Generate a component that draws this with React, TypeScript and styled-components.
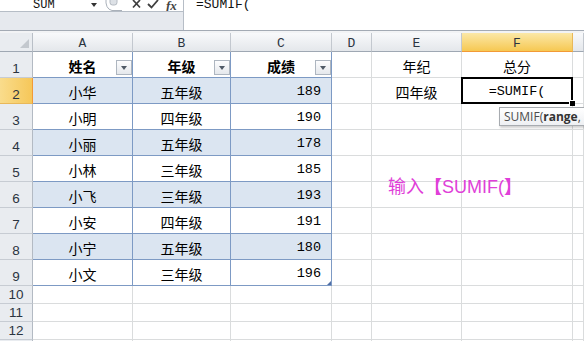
import React from "react";
import styled, { createGlobalStyle } from "styled-components";

const Global = createGlobalStyle`
  html, body { margin: 0; padding: 0; background: #fff; overflow: hidden; }
  body { width: 584px; height: 341px; font-family: "Liberation Sans", "Noto Sans CJK SC", sans-serif; }
`;

const Screen = styled.div`
  position: relative;
  width: 584px;
  height: 341px;
  overflow: hidden;
  background: #fff;
  display: flex;
  flex-direction: column;
`;

const FormulaBar = styled.div`
  display: flex;
  height: 30px;
  flex-shrink: 0;
  border-bottom: 1px solid #a3aab4;
`;

const LeftPane = styled.div`
  width: 183px;
  display: flex;
  flex-direction: column;
  background: #e6e9ee;
  border-right: 1px solid #b6bdc6;
`;

const NameRow = styled.div`
  height: 11px;
  background: #fff;
  border-bottom: 1px solid #b6bdc6;
  display: flex;
  align-items: flex-start;
  overflow: hidden;
`;

const NameBox = styled.div`
  width: 104px;
  display: flex;
  align-items: flex-start;
  justify-content: space-between;
  padding: 0 7px 0 33px;
  margin-top: -1px;
  box-sizing: border-box;
  font: 12px/12px "Liberation Mono", monospace;
  color: #111;
`;

const DropArrow = styled.span`
  width: 0;
  height: 0;
  border-left: 3px solid transparent;
  border-right: 3px solid transparent;
  border-top: 4px solid #333;
  margin-top: 4px;
`;

const Buttons = styled.div`
  display: flex;
  align-items: flex-start;
  gap: 6px;
  flex: 1;
`;

const Fx = styled.span`
  font: italic 700 13px/11px "Liberation Serif", serif;
  color: #444;
  margin-left: 1px;
`;

const FormulaText = styled.div`
  flex: 1;
  background: #fff;
  padding-left: 12px;
  margin-top: -1px;
  font: 13px/12px "Liberation Mono", monospace;
  color: #111;
  overflow: hidden;
`;

const Spacer = styled.div`
  height: 2px;
  flex-shrink: 0;
  background: #f2f3f5;
`;

const Sheet = styled.div`
  display: grid;
  grid-template-columns: 33px 100px 98px 101px 40px 90px 111px 1fr;
  grid-template-rows: 19px repeat(9, 26px) repeat(4, 18px);
`;

const Corner = styled.div`
  position: relative;
  box-sizing: border-box;
  background: #e9ecf0;
  border-right: 1px solid #b9bfc7;
  border-bottom: 1px solid #9fa8b3;
  &::after {
    content: "";
    position: absolute;
    right: 3px;
    bottom: 3px;
    width: 0;
    height: 0;
    border-left: 9px solid transparent;
    border-bottom: 9px solid #c3c8ce;
  }
`;

const ColHead = styled.div<{ $sel?: boolean }>`
  box-sizing: border-box;
  display: flex;
  align-items: center;
  justify-content: center;
  padding-top: 2px;
  background: ${(p) => (p.$sel ? "linear-gradient(#fbe8a8, #f6c852)" : "linear-gradient(#f8f9fb, #e4e7eb)")};
  border-right: 1px solid ${(p) => (p.$sel ? "#e9b859" : "#c3c8cf")};
  border-bottom: 1px solid ${(p) => (p.$sel ? "#f29a36" : "#9fa8b3")};
  font: 13px "Liberation Mono", monospace;
  color: #2b3440;
`;

const RowHead = styled.div<{ $sel?: boolean; $small?: boolean }>`
  box-sizing: border-box;
  display: flex;
  align-items: ${(p) => (p.$small ? "center" : "flex-end")};
  justify-content: center;
  padding-bottom: ${(p) => (p.$small ? "0" : "1px")};
  background: ${(p) => (p.$sel ? "linear-gradient(90deg, #f9dc8c, #f6c759)" : "#e9ecf0")};
  border-right: 1px solid ${(p) => (p.$sel ? "#f29a36" : "#b3bac3")};
  border-bottom: 1px solid ${(p) => (p.$sel ? "#e9b859" : "#c7ccd3")};
  font: 13.5px "Liberation Sans", sans-serif;
  color: #2b3440;
`;

type Align = "left" | "center" | "right";

const Cell = styled.div<{
  $tbl?: boolean;
  $band?: boolean;
  $align?: Align;
  $bold?: boolean;
  $num?: boolean;
  $active?: boolean;
  $handle?: boolean;
}>`
  position: relative;
  box-sizing: border-box;
  min-width: 0;
  display: flex;
  align-items: center;
  justify-content: ${(p) => (p.$align === "right" ? "flex-end" : p.$align === "left" ? "flex-start" : "center")};
  padding: 2px ${(p) => (p.$align === "right" ? "10px" : "2px")} 0 2px;
  background: ${(p) => (p.$band ? "#dbe5f1" : "#fff")};
  border-right: 1px solid ${(p) => (p.$tbl ? "#7d9ac4" : "#dadcdd")};
  border-bottom: 1px solid ${(p) => (p.$tbl ? "#7d9ac4" : "#dadcdd")};
  font-family: ${(p) =>
    p.$num ? '"Liberation Mono", "Noto Sans CJK SC", monospace' : '"Noto Sans CJK SC", sans-serif'};
  font-size: ${(p) => (p.$num ? "13.5px" : "14px")};
  font-weight: ${(p) => (p.$bold ? 700 : 400)};
  color: #000;
  white-space: nowrap;
  ${(p) =>
    p.$active &&
    `
    z-index: 3;
    &::after {
      content: "";
      position: absolute;
      left: -1px; top: -1px; right: -1px; bottom: -1px;
      border: 2px solid #000;
    }
    &::before {
      content: "";
      position: absolute;
      right: -3px; bottom: -3px;
      width: 5px; height: 5px;
      background: #000;
      border-left: 1px solid #fff;
      border-top: 1px solid #fff;
      z-index: 4;
    }
  `}
  ${(p) =>
    p.$handle &&
    `
    &::after {
      content: "";
      position: absolute;
      right: 0; bottom: 0;
      width: 0; height: 0;
      border-left: 4px solid transparent;
      border-bottom: 4px solid #4f6ea6;
    }
  `}
`;

const FilterBtn = styled.span`
  position: absolute;
  right: 0;
  bottom: 2px;
  width: 16px;
  height: 15px;
  box-sizing: border-box;
  border: 1px solid #aeb6c0;
  background: linear-gradient(#fdfdfe, #e5e8ec);
  display: flex;
  align-items: center;
  justify-content: center;
  &::after {
    content: "";
    width: 0;
    height: 0;
    border-left: 3.5px solid transparent;
    border-right: 3.5px solid transparent;
    border-top: 4px solid #505a66;
  }
`;

const Note = styled.div`
  position: absolute;
  left: 388px;
  top: 172px;
  font: 18px "Liberation Sans", "Noto Sans CJK SC", sans-serif;
  color: #e03fd8;
  white-space: nowrap;
`;

const Bracket = styled.span`
  font-weight: 700;
`;

const Tip = styled.div`
  position: absolute;
  left: 499px;
  top: 107px;
  width: 110px;
  height: 19px;
  box-sizing: border-box;
  padding: 0 0 0 4px;
  border: 1px solid #a7abb0;
  background: linear-gradient(#ffffff, #eef0f3);
  box-shadow: 1px 2px 2px rgba(0, 0, 0, 0.18);
  font: 12px/17px "Open Sans", "Liberation Sans", sans-serif;
  color: #4c4c4c;
  white-space: nowrap;
  z-index: 5;
`;

const Arg = styled.b`
  font-weight: 700;
  color: #333;
`;

const COLS = ["A", "B", "C", "D", "E", "F", "G"];

const data: [string, string, string][] = [
  ["小华", "五年级", "189"],
  ["小明", "四年级", "190"],
  ["小丽", "五年级", "178"],
  ["小林", "三年级", "185"],
  ["小飞", "三年级", "193"],
  ["小安", "四年级", "191"],
  ["小宁", "五年级", "180"],
  ["小文", "三年级", "196"],
];

const Grip = () => (
  <svg width="18" height="11" viewBox="0 0 18 11" style={{ display: "block", marginRight: 4 }}>
    <path d="M2 -2 Q1 9 8 10.5 L18 10.5" fill="none" stroke="#aab1ba" strokeWidth="1" />
    <rect x="6" y="-4" width="7" height="9" rx="2.5" fill="#dde1e6" stroke="#b4bac2" />
  </svg>
);

const Cross = () => (
  <svg width="9" height="9" viewBox="0 0 9 9" style={{ display: "block" }}>
    <path d="M1 0 L8 7.5 M8 0 L1 7.5" stroke="#3f3f3f" strokeWidth="1.7" />
  </svg>
);

const Check = () => (
  <svg width="12" height="10" viewBox="0 0 12 10" style={{ display: "block" }}>
    <path d="M1 4 L4.5 7.5 L11 0" fill="none" stroke="#3f3f3f" strokeWidth="1.8" />
  </svg>
);

export default function App() {
  const rows: React.ReactNode[] = [];

  rows.push(<Corner key="corner" />);
  COLS.forEach((c) =>
    rows.push(
      <ColHead key={"h" + c} $sel={c === "F"}>
        {c !== "G" ? c : ""}
      </ColHead>
    )
  );

  rows.push(<RowHead key="r1">1</RowHead>);
  ["姓名", "年级", "成绩"].forEach((t, i) =>
    rows.push(
      <Cell key={"r1c" + i} $tbl $bold>
        {t}
        <FilterBtn />
      </Cell>
    )
  );
  rows.push(<Cell key="r1d" />);
  rows.push(<Cell key="r1e">年纪</Cell>);
  rows.push(<Cell key="r1f">总分</Cell>);
  rows.push(<Cell key="r1g" />);

  data.forEach((d, i) => {
    const r = i + 2;
    const band = i % 2 === 0;
    rows.push(
      <RowHead key={"rh" + r} $sel={r === 2}>
        {r}
      </RowHead>
    );
    rows.push(
      <Cell key={r + "a"} $tbl $band={band}>
        {d[0]}
      </Cell>
    );
    rows.push(
      <Cell key={r + "b"} $tbl $band={band}>
        {d[1]}
      </Cell>
    );
    rows.push(
      <Cell key={r + "c"} $tbl $band={band} $align="right" $num $handle={r === 9}>
        {d[2]}
      </Cell>
    );
    rows.push(<Cell key={r + "d"} />);
    rows.push(<Cell key={r + "e"}>{r === 2 ? "四年级" : ""}</Cell>);
    rows.push(
      r === 2 ? (
        <Cell key={r + "f"} $active $num>
          =SUMIF(
        </Cell>
      ) : (
        <Cell key={r + "f"} />
      )
    );
    rows.push(<Cell key={r + "g"} />);
  });

  for (let r = 10; r <= 13; r++) {
    rows.push(
      <RowHead key={"rh" + r} $small>
        {r}
      </RowHead>
    );
    COLS.forEach((c) => rows.push(<Cell key={r + c} />));
  }

  return (
    <Screen>
      <Global />
      <FormulaBar>
        <LeftPane>
          <NameRow>
            <NameBox>
              <span>SUM</span>
              <DropArrow />
            </NameBox>
            <Buttons>
              <Grip />
              <Cross />
              <Check />
              <Fx>fx</Fx>
            </Buttons>
          </NameRow>
        </LeftPane>
        <FormulaText>=SUMIF(</FormulaText>
      </FormulaBar>
      <Spacer />
      <Sheet>{rows}</Sheet>
      <Tip>
        SUMIF(<Arg>range</Arg>,
      </Tip>
      <Note>
        输入<Bracket>【</Bracket>SUMIF(<Bracket>】</Bracket>
      </Note>
    </Screen>
  );
}
